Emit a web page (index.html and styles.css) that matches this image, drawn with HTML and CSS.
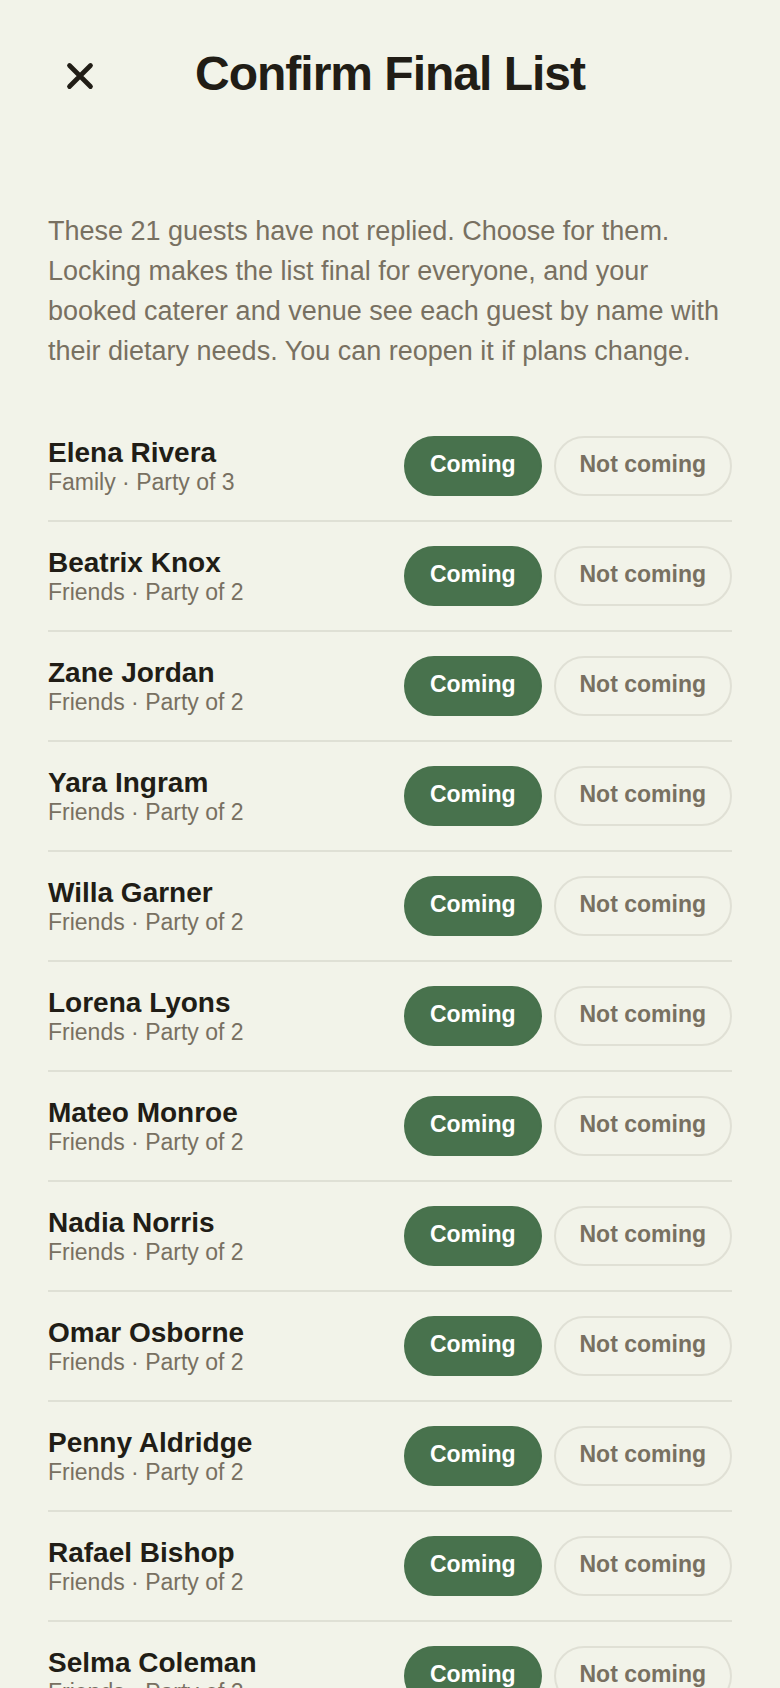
FILE: index.html
```html
<!DOCTYPE html>
<html lang="en">
  <head>
    <meta charset="UTF-8" />
    <meta name="viewport" content="width=device-width, initial-scale=1.0" />
    <title>Confirm Final List</title>
    <link rel="stylesheet" href="styles.css">
  </head>
  <body>
    <div class="screen">
      <header class="header">
        <button class="close" type="button" aria-label="Close">
          <svg viewBox="0 0 24 24" aria-hidden="true"><path d="M6 6l12 12M18 6L6 18" /></svg>
        </button>
        <h1>Confirm Final List</h1>
      </header>

      <main>
        <p class="intro">These 21 guests have not replied. Choose for them. Locking makes the list final for everyone, and your booked caterer and venue see each guest by name with their dietary needs. You can reopen it if plans change.</p>

        <ul class="guests">
          <li class="guest">
            <div class="info">
              <h2>Elena Rivera</h2>
              <p>Family · Party of 3</p>
            </div>
            <div class="choices" role="group" aria-label="Elena Rivera">
              <button class="choice" type="button" aria-pressed="true">Coming</button>
              <button class="choice" type="button" aria-pressed="false">Not coming</button>
            </div>
          </li>
          <li class="guest">
            <div class="info">
              <h2>Beatrix Knox</h2>
              <p>Friends · Party of 2</p>
            </div>
            <div class="choices" role="group" aria-label="Beatrix Knox">
              <button class="choice" type="button" aria-pressed="true">Coming</button>
              <button class="choice" type="button" aria-pressed="false">Not coming</button>
            </div>
          </li>
          <li class="guest">
            <div class="info">
              <h2>Zane Jordan</h2>
              <p>Friends · Party of 2</p>
            </div>
            <div class="choices" role="group" aria-label="Zane Jordan">
              <button class="choice" type="button" aria-pressed="true">Coming</button>
              <button class="choice" type="button" aria-pressed="false">Not coming</button>
            </div>
          </li>
          <li class="guest">
            <div class="info">
              <h2>Yara Ingram</h2>
              <p>Friends · Party of 2</p>
            </div>
            <div class="choices" role="group" aria-label="Yara Ingram">
              <button class="choice" type="button" aria-pressed="true">Coming</button>
              <button class="choice" type="button" aria-pressed="false">Not coming</button>
            </div>
          </li>
          <li class="guest">
            <div class="info">
              <h2>Willa Garner</h2>
              <p>Friends · Party of 2</p>
            </div>
            <div class="choices" role="group" aria-label="Willa Garner">
              <button class="choice" type="button" aria-pressed="true">Coming</button>
              <button class="choice" type="button" aria-pressed="false">Not coming</button>
            </div>
          </li>
          <li class="guest">
            <div class="info">
              <h2>Lorena Lyons</h2>
              <p>Friends · Party of 2</p>
            </div>
            <div class="choices" role="group" aria-label="Lorena Lyons">
              <button class="choice" type="button" aria-pressed="true">Coming</button>
              <button class="choice" type="button" aria-pressed="false">Not coming</button>
            </div>
          </li>
          <li class="guest">
            <div class="info">
              <h2>Mateo Monroe</h2>
              <p>Friends · Party of 2</p>
            </div>
            <div class="choices" role="group" aria-label="Mateo Monroe">
              <button class="choice" type="button" aria-pressed="true">Coming</button>
              <button class="choice" type="button" aria-pressed="false">Not coming</button>
            </div>
          </li>
          <li class="guest">
            <div class="info">
              <h2>Nadia Norris</h2>
              <p>Friends · Party of 2</p>
            </div>
            <div class="choices" role="group" aria-label="Nadia Norris">
              <button class="choice" type="button" aria-pressed="true">Coming</button>
              <button class="choice" type="button" aria-pressed="false">Not coming</button>
            </div>
          </li>
          <li class="guest">
            <div class="info">
              <h2>Omar Osborne</h2>
              <p>Friends · Party of 2</p>
            </div>
            <div class="choices" role="group" aria-label="Omar Osborne">
              <button class="choice" type="button" aria-pressed="true">Coming</button>
              <button class="choice" type="button" aria-pressed="false">Not coming</button>
            </div>
          </li>
          <li class="guest">
            <div class="info">
              <h2>Penny Aldridge</h2>
              <p>Friends · Party of 2</p>
            </div>
            <div class="choices" role="group" aria-label="Penny Aldridge">
              <button class="choice" type="button" aria-pressed="true">Coming</button>
              <button class="choice" type="button" aria-pressed="false">Not coming</button>
            </div>
          </li>
          <li class="guest">
            <div class="info">
              <h2>Rafael Bishop</h2>
              <p>Friends · Party of 2</p>
            </div>
            <div class="choices" role="group" aria-label="Rafael Bishop">
              <button class="choice" type="button" aria-pressed="true">Coming</button>
              <button class="choice" type="button" aria-pressed="false">Not coming</button>
            </div>
          </li>
          <li class="guest">
            <div class="info">
              <h2>Selma Coleman</h2>
              <p>Friends · Party of 2</p>
            </div>
            <div class="choices" role="group" aria-label="Selma Coleman">
              <button class="choice" type="button" aria-pressed="true">Coming</button>
              <button class="choice" type="button" aria-pressed="false">Not coming</button>
            </div>
          </li>
        </ul>
      </main>
    </div>
    <script>
      // Only one choice per guest can be on
      document.querySelectorAll('.choices').forEach(function (group) {
        group.addEventListener('click', function (event) {
          if (!event.target.matches('.choice')) return;
          group.querySelectorAll('.choice').forEach(function (choice) {
            choice.setAttribute('aria-pressed', choice === event.target);
          });
        });
      });
    </script>
  </body>
</html>
```
FILE: styles.css
```css
* {
  margin: 0;
  padding: 0;
  box-sizing: border-box;
}

body {
  background: #f2f3e9;
  color: #211d16;
  font-family: "Liberation Sans", Arial, sans-serif;
}

button {
  font: inherit;
  border: none;
  background: none;
  cursor: pointer;
}

.screen {
  height: 100vh;
  overflow-y: auto;
  scrollbar-width: none;
  padding: 44px 48px 0;
}

/* header */
.header {
  display: grid;
  grid-template-columns: 64px 1fr 64px;
  align-items: start;
  margin-bottom: 103px;
}

.close {
  display: flex;
  align-items: center;
  justify-content: center;
  height: 64px;
}

.close svg {
  width: 42px;
  height: 42px;
  fill: none;
  stroke: #211d16;
  stroke-width: 2.7;
  stroke-linecap: round;
}

h1 {
  font-size: 48px;
  line-height: 60px;
  letter-spacing: -1px;
  text-align: center;
}

.intro {
  font-size: 27px;
  line-height: 40px;
  color: #787061;
  margin-bottom: 41px;
}

/* guest rows */
.guests {
  list-style: none;
}

.guest {
  display: flex;
  align-items: center;
  justify-content: space-between;
  gap: 24px;
  padding: 24px 0;
  border-bottom: 2px solid #dfe0d5;
}

.info h2 {
  font-size: 28px;
  line-height: 32px;
}

.info p {
  font-size: 23px;
  line-height: 26px;
  color: #787061;
}

.choices {
  display: flex;
  gap: 12px;
}

.choice {
  height: 60px;
  padding: 0 24px 4px;
  border: 2px solid #e0e0d5;
  border-radius: 30px;
  font-size: 23px;
  font-weight: bold;
  color: #787061;
  white-space: nowrap;
}

.choice[aria-pressed="true"] {
  background: #48724d;
  border-color: #48724d;
  color: #fff;
}
```
